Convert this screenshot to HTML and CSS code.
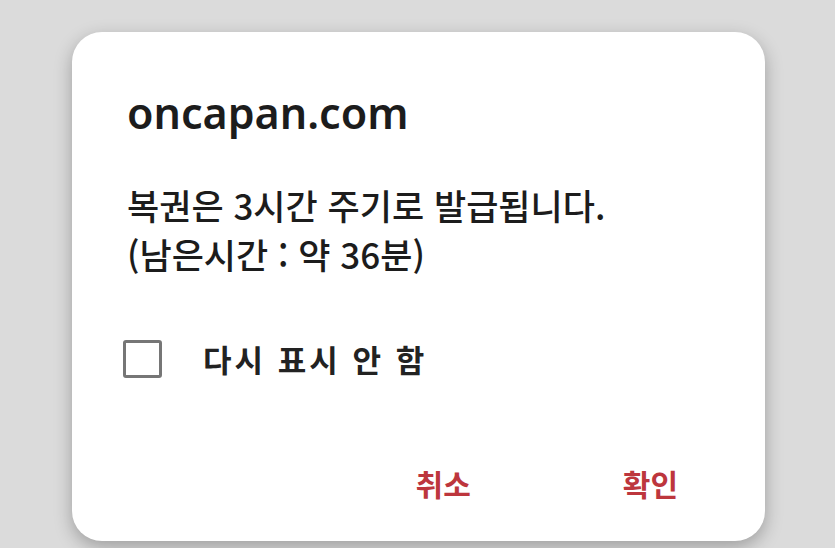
FILE: index.html
```html
<!DOCTYPE html>
<html lang="ko">
<head>
<meta charset="utf-8">
<title>oncapan.com</title>
<link rel="stylesheet" href="styles.css">
</head>
<body>
<div class="dialog">
  <h1 class="title">oncapan.com</h1>
  <p class="message">복권은 3시간 주기로 발급됩니다.<br>(남은시간 : 약 36분)</p>
  <label class="check-row">
    <span class="checkbox"></span>
    <span class="check-label">다시 표시 안 함</span>
  </label>
  <div class="actions">
    <span class="btn">취소</span>
    <span class="btn">확인</span>
  </div>
</div>
</body>
</html>
```
FILE: styles.css
```css
html, body {
  margin: 0;
  padding: 0;
}
body {
  width: 835px;
  height: 548px;
  overflow: hidden;
  background: #dbdbdb;
  font-family: "Noto Sans CJK KR", "Noto Sans", sans-serif;
  color: #1f1f1f;
}
.dialog {
  box-sizing: border-box;
  margin: 32px 0 0 72px;
  width: 693px;
  height: 509px;
  background: #ffffff;
  border-radius: 30px;
  box-shadow: 0 6px 18px rgba(0, 0, 0, 0.28);
  padding: 57px 0 0 55px;
  display: flex;
  flex-direction: column;
}
.title {
  margin: 0;
  font-family: "Noto Sans", sans-serif;
  font-weight: 600;
  font-size: 43px;
  line-height: 48px;
  color: #1c1c1c;
}
.message {
  margin: 43px 0 0;
  font-size: 35px;
  line-height: 49px;
  font-weight: 500;
  color: #1c1c1c;
}
.check-row {
  margin: 58px 0 0 -4px;
  display: flex;
  align-items: center;
  gap: 41px;
}
.checkbox {
  box-sizing: border-box;
  width: 39px;
  height: 38px;
  border: 3.5px solid #767676;
  border-radius: 3px;
}
.check-label {
  font-size: 31px;
  font-weight: 700;
  color: #222;
  letter-spacing: 3px;
}
.actions {
  margin-top: auto;
  margin-bottom: 36px;
  display: flex;
  justify-content: flex-end;
  gap: 152px;
  padding-right: 87px;
}
.btn {
  font-size: 30px;
  font-weight: 700;
  color: #bd363d;
}
```
